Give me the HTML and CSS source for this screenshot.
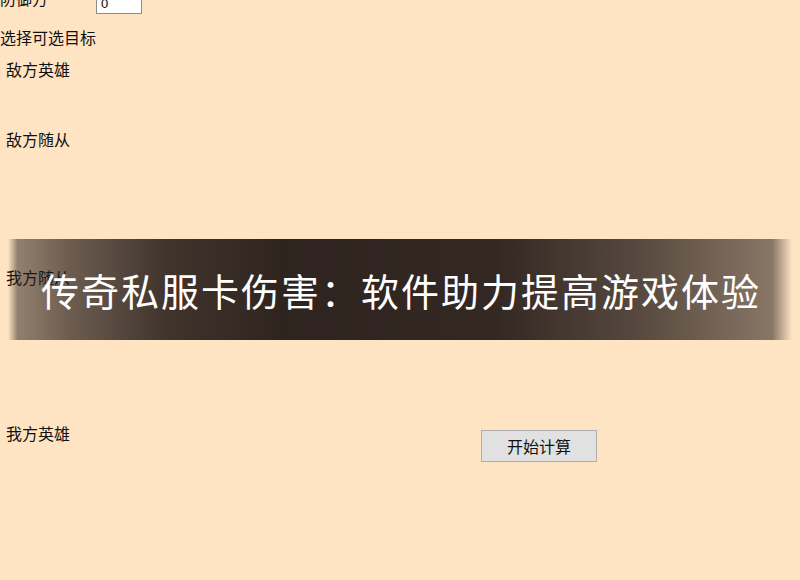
FILE: index.html
```html
<!DOCTYPE html>
<html lang="zh">
<head>
<meta charset="utf-8">
<title>传奇私服卡伤害</title>
<link rel="stylesheet" href="styles.css">
</head>
<body>
<div class="page">
  <div class="row top-row">
    <span class="label">防御方</span>
    <input class="num" type="text" value="0">
  </div>
  <div class="label title">选择可选目标</div>
  <div class="label group g1">敌方英雄</div>
  <div class="label group g2">敌方随从</div>
  <div class="label group g3">我方随从</div>
  <div class="row last-row">
    <span class="label group">我方英雄</span>
    <button class="btn" type="button">开始计算</button>
  </div>
</div>
<div class="banner"><span class="banner-text">传奇私服卡伤害：软件助力提高游戏体验</span></div>
</body>
</html>
```

FILE: styles.css
```css
html, body {
  margin: 0;
  padding: 0;
  background: #ffe4c4;
  width: 800px;
  height: 580px;
  overflow: hidden;
}
.page {
  font-family: "Noto Sans CJK SC", "Noto Sans", sans-serif;
  font-size: 16px;
  color: #111;
  display: flex;
  flex-direction: column;
}
.label {
  display: block;
  line-height: 16px;
  height: 16px;
  white-space: nowrap;
}
.row {
  display: flex;
  align-items: flex-start;
}
.top-row {
  margin-top: -8px;
  height: 22px;
}
.top-row .label {
  width: 96px;
  margin-top: -2px;
}
.num {
  width: 46px;
  height: 22px;
  box-sizing: border-box;
  border: 1px solid #8c8c8c;
  background: #ffffff;
  font-family: "Liberation Sans", sans-serif;
  font-size: 13px;
  padding: 0 4px;
  margin: 0;
}
.title {
  margin-top: 15px;
}
.group {
  padding-left: 6px;
}
.g1 { margin-top: 16px; }
.g2 { margin-top: 54px; }
.g3 { margin-top: 122px; }
.last-row {
  margin-top: 140px;
}
.last-row .label {
  width: 475px;
}
.btn {
  margin-top: 5px;
  width: 116px;
  height: 32px;
  box-sizing: border-box;
  background: #e1e1e1;
  border: 1px solid #adadad;
  font-family: "Noto Sans CJK SC", sans-serif;
  font-size: 16px;
  color: #111;
  padding: 0;
}
.banner {
  position: absolute;
  left: 8px;
  top: 239px;
  width: 784px;
  height: 101px;
  display: flex;
  align-items: center;
  justify-content: center;
  background: linear-gradient(to right,
    rgba(38, 28, 24, 0) 0%,
    rgba(38, 28, 24, 0.5) 1.2%,
    rgba(38, 28, 24, 0.68) 8%,
    rgba(38, 28, 24, 0.88) 20%,
    rgba(38, 28, 24, 0.96) 35%,
    rgba(38, 28, 24, 0.94) 62%,
    rgba(38, 28, 24, 0.78) 80%,
    rgba(38, 28, 24, 0.55) 97.5%,
    rgba(38, 28, 24, 0) 100%);
}
.banner-text {
  font-family: "Noto Sans CJK SC", "Noto Sans", sans-serif;
  font-size: 38px;
  letter-spacing: 2px;
  color: #ffffff;
  line-height: 1;
  white-space: nowrap;
  margin-top: 0;
  margin-left: 2px;
}
```
